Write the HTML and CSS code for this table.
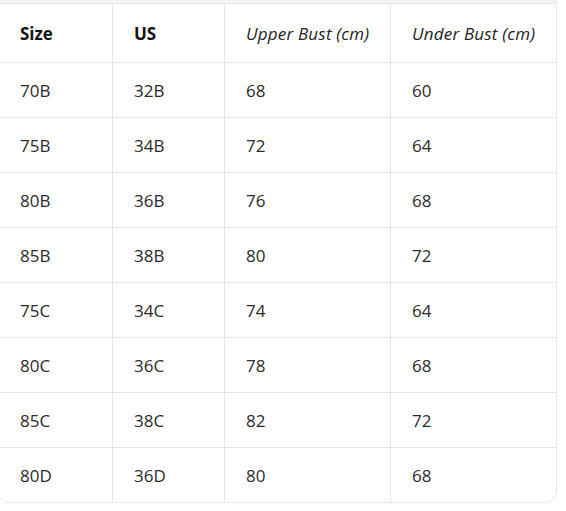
FILE: index.html
```html
<!DOCTYPE html>
<html lang="en">
<head>
<meta charset="utf-8">
<link rel="stylesheet" href="styles.css">
</head>
<body>
<div class="page">
  <div class="top-strip"></div>
  <table class="size-table">
    <colgroup>
      <col class="c1"><col class="c2"><col class="c3"><col class="c4">
    </colgroup>
    <thead>
      <tr><th>Size</th><th>US</th><th class="em">Upper Bust (cm)</th><th class="em">Under Bust (cm)</th></tr>
    </thead>
    <tbody>
      <tr><td>70B</td><td>32B</td><td>68</td><td>60</td></tr>
      <tr><td>75B</td><td>34B</td><td>72</td><td>64</td></tr>
      <tr><td>80B</td><td>36B</td><td>76</td><td>68</td></tr>
      <tr><td>85B</td><td>38B</td><td>80</td><td>72</td></tr>
      <tr><td>75C</td><td>34C</td><td>74</td><td>64</td></tr>
      <tr><td>80C</td><td>36C</td><td>78</td><td>68</td></tr>
      <tr><td>85C</td><td>38C</td><td>82</td><td>72</td></tr>
      <tr><td>80D</td><td>36D</td><td>80</td><td>68</td></tr>
    </tbody>
  </table>
</div>
</body>
</html>
```
FILE: styles.css
```css
html, body {
  margin: 0;
  padding: 0;
  background: #ffffff;
}
body {
  font-family: "Open Sans", "Noto Sans", sans-serif;
  color: #2b2b2b;
  overflow: hidden;
}
.page {
  width: 566px;
  height: 511px;
  overflow: hidden;
}
.top-strip {
  width: 557px;
  height: 3px;
  background: #f4f4f4;
}
.size-table {
  margin-left: -3px;
  width: 560px;
  table-layout: fixed;
  border-collapse: separate;
  border-spacing: 0;
  border: 1px solid #e6e6e6;
  border-radius: 0 0 12px 12px;
  font-size: 17px;
}
.c1 { width: 115px; }
.c2 { width: 112px; }
.c3 { width: 166px; }
.c4 { width: 165px; }
.size-table th,
.size-table td {
  text-align: left;
  padding: 0 0 0 21px;
  border-right: 1px solid #e6e6e6;
  border-bottom: 1px solid #e6e6e6;
  vertical-align: middle;
  white-space: nowrap;
}
.size-table th:first-child,
.size-table td:first-child { padding-left: 22px; }
.size-table th:last-child,
.size-table td:last-child { border-right: none; }
.size-table tbody tr:last-child td { border-bottom: none; }
.size-table th {
  height: 58px;
  font-weight: 700;
  color: #111;
}
.size-table th.em {
  font-weight: 400;
  font-style: italic;
  color: #222;
  letter-spacing: 0.2px;
}
.size-table td {
  height: 54px;
}
```
